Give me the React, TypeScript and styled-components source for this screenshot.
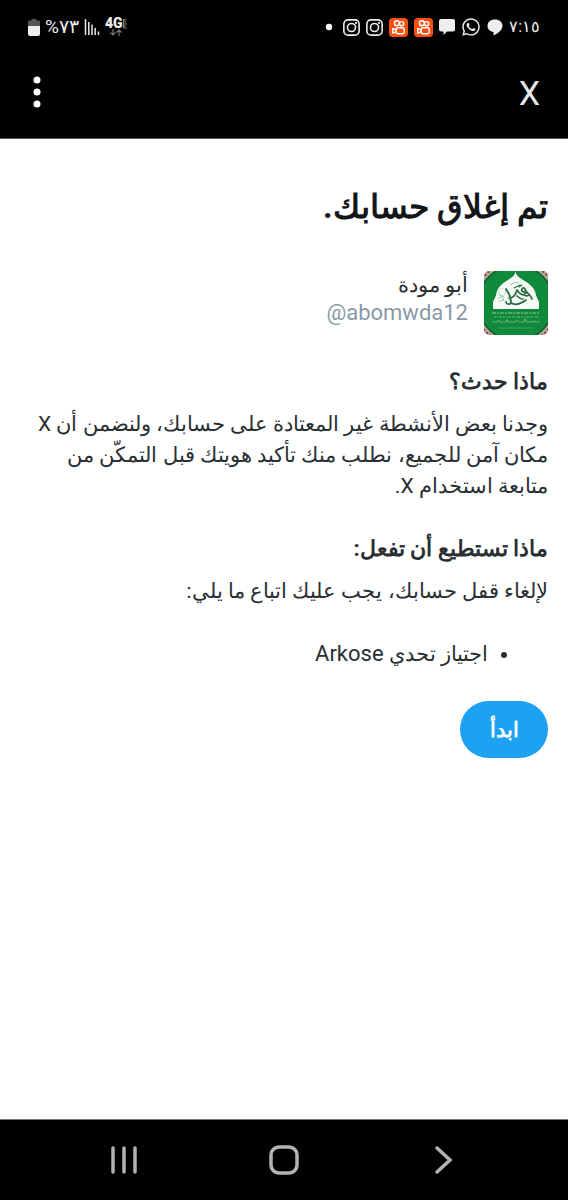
import React from "react";
import styled, { createGlobalStyle } from "styled-components";
import { FaWhatsapp } from "react-icons/fa";

const GlobalStyle = createGlobalStyle`
  *, *::before, *::after { box-sizing: border-box; }
  body {
    margin: 0;
    background: #fff;
    font-family: Roboto, "Liberation Sans", sans-serif;
    color: #292f33;
  }
`;

const Screen = styled.div`
  min-height: 100vh;
  display: flex;
  flex-direction: column;
`;

const StatusBar = styled.div`
  height: 54px;
  padding: 0 28px;
  background: #000;
  color: #eee;
  display: flex;
  align-items: center;
  justify-content: space-between;
`;

const StatusGroup = styled.div<{ $gap: number }>`
  display: flex;
  align-items: center;
  gap: ${(p) => p.$gap}px;
`;

const StatusText = styled.span<{ $size: number }>`
  font-size: ${(p) => p.$size}px;
  line-height: 20px;
`;

const Network = styled.span`
  display: flex;
  flex-direction: column;
  align-items: center;
`;

const NetworkType = styled.span`
  font-size: 14px;
  line-height: 11px;
  font-weight: 900;
`;

const AppBar = styled.header`
  height: 85px;
  padding: 0 28px 8px;
  background: #000;
  border-bottom: 1px solid #555;
  display: flex;
  align-items: center;
  justify-content: space-between;
`;

const BarTitle = styled.span`
  padding-top: 2px;
  font-size: 34px;
  line-height: 40px;
  color: #e6e6e6;
`;

const IconButton = styled.button`
  padding: 0;
  border: 0;
  background: none;
  display: flex;
`;

const Main = styled.main`
  flex: 1;
  padding: 44px 20px;
`;

const Title = styled.h1`
  margin: 0;
  font-size: 33px;
  line-height: 48px;
  font-weight: 700;
  color: #14171a;
`;

const Account = styled.div`
  margin-top: 40px;
  display: flex;
  gap: 16px;
`;

const AccountText = styled.div`
  display: flex;
  flex-direction: column;
  line-height: 28px;
`;

const Name = styled.span`
  font-size: 21px;
  font-weight: 500;
`;

const Handle = styled.span`
  font-size: 22px;
  color: #8899a6;
`;

const Section = styled.section`
  margin-top: 32px;
`;

const Heading = styled.h2`
  margin: 0 0 12px;
  font-size: 22px;
  line-height: 30px;
  font-weight: 700;
`;

const Paragraph = styled.p`
  margin: 0;
  font-size: 21px;
  line-height: 31px;
`;

const Latin = styled.span`
  font-size: 22px;
`;

const Steps = styled.ul`
  margin: 32px 0;
  padding: 0 60px 0 0;
  font-size: 21px;
  line-height: 30px;
`;

const StartButton = styled.button`
  height: 57px;
  min-width: 88px;
  padding: 0 28px;
  border: 0;
  border-radius: 29px;
  background: #1da1f2;
  color: #fff;
  font: inherit;
  font-size: 21px;
  font-weight: 700;
`;

const NavBar = styled.nav`
  height: 81px;
  padding: 0 44px;
  background: #000;
  border-top: 1px solid #777;
  display: flex;
  align-items: center;
  justify-content: space-around;
`;

const Instagram = () => (
  <svg width="17" height="17" viewBox="0 0 16 16" fill="none" stroke="#eee" strokeWidth="1.5">
    <rect x="0.8" y="0.8" width="14.4" height="14.4" rx="4" />
    <circle cx="8" cy="8" r="3.8" />
    <circle cx="12.3" cy="3.7" r="1" fill="#eee" stroke="none" />
  </svg>
);

const Kwai = () => (
  <svg width="19" height="19" viewBox="0 0 20 20" fill="none" stroke="#fff" strokeWidth="1.5">
    <rect width="20" height="20" rx="4" fill="#fb4f12" stroke="none" />
    <circle cx="8.300" cy="5.500" r="2.600" />
    <circle cx="13.300" cy="6" r="2.200" />
    <rect x="7.500" y="10.300" width="8.500" height="6.200" rx="1.800" />
    <path d="M7.500 12.500 4 11v5l3.500-1.500" strokeLinejoin="round" />
  </svg>
);

const Avatar = () => (
  <svg width="64" height="64" viewBox="0 0 64 64" role="img" aria-label="أبو مودة">
    <defs>
      <clipPath id="frame"><rect width="64" height="64" rx="5" /></clipPath>
    </defs>
    <g clipPath="url(#frame)">
      <rect width="64" height="64" fill="#b9a999" />
      <circle cx="32" cy="32" r="41.500" fill="none" stroke="#7b4c45" strokeWidth="2" strokeDasharray="2 2" />
      <circle cx="32" cy="32" r="38.500" fill="#0f5c2b" />
      <circle cx="32" cy="32" r="37" fill="#10893a" />
      <path d="M31.500 0C31 5 28 6 24 9C17 13 13 17 12 24C11 28 9 29 9 32V38H55V32C55 29 53 28 52 24C51 17 46 13 39 9C35 6 32 5 31.500 0Z" fill="#f6faf6" />
      <g fill="none" stroke="#2a6e42" strokeLinecap="round" strokeLinejoin="round">
        <path d="M45 24c-1-3-4-3-5 0 2 1 4 1 5 0M40 24c-3 0-5-2-7-5M42 20c-3 2-5 0-4-2 1-2 3-1 4 2M42 20c2 3 5 4 6 8M33 19c-1 4-3 8-8 8M33 25c2 2 4 3 6 3" strokeWidth="1.700" />
        <path d="M22 18c3 4 5 9 5 14 5 3 11 0 15-3M27 32c-2 2-5 1-5-1" strokeWidth="1.800" />
        <path d="M30 17l6-3M35 16l3-2" strokeWidth="1.100" />
      </g>
      <g fill="none" stroke="#9bc3a8" strokeWidth="1">
        <circle cx="18" cy="21" r="3.500" strokeDasharray="1 1" />
        <path d="M14 28q4-5 6 2M15 24l5 2M15 31l5-3M26 14q5-4 9-2" />
      </g>
      <g fill="none" stroke="#68b37e">
        <path d="M8 42h48" strokeDasharray="4 1 2 1" strokeWidth="1.500" />
        <path d="M10 46h44" strokeDasharray="2 1 1 1 3 1" strokeWidth="1.500" opacity=".7" />
        <path d="M8 51h5q2-3 3 0h6l1-2 2 2h6q2-3 4 0h5l1-3 2 3h5q2-2 3 0h5" strokeWidth="1.200" />
        <path d="M14 57h36" strokeDasharray="2 1 4 1" opacity=".7" />
      </g>
    </g>
  </svg>
);

export default function App() {
  return (
    <Screen dir="rtl" lang="ar">
      <GlobalStyle />
      <StatusBar>
        <StatusGroup $gap={6}>
          <StatusText $size={16}>٧:١٥</StatusText>
          <svg width="16" height="17" viewBox="0 0 16 17" fill="#eee">
            <path d="M8 .5C3.500.5.5 3.200.5 6.800c0 3.500 2.700 5.900 6 6.200V16.500C10 15 15.500 11.500 15.500 6.800 15.500 3.200 12.500.5 8 .5Z" />
          </svg>
          <FaWhatsapp size={20} />
          <svg width="16" height="16" viewBox="0 0 16 16" fill="#eee">
            <path d="M2 0h12a2 2 0 0 1 2 2v8.500a2 2 0 0 1-2 2H8L4.500 16v-3.500H2a2 2 0 0 1-2-2V2a2 2 0 0 1 2-2Z" />
          </svg>
          <Kwai />
          <Kwai />
          <Instagram />
          <Instagram />
          <svg width="16" height="8" viewBox="0 0 16 8"><circle cx="8" cy="4" r="3.200" fill="#fff" /></svg>
        </StatusGroup>
        <StatusGroup $gap={5}>
          <Network>
            <StatusGroup $gap={0} dir="ltr">
              <NetworkType>4G</NetworkType>
              <svg width="4" height="10" viewBox="0 0 4 10" fill="none" stroke="#999" strokeWidth="0.800">
                <path d="M0 1h4M0 3h3M0 5h4M0 7h3M0 9h4M.5 0v9" />
              </svg>
            </StatusGroup>
            <svg width="14" height="7" viewBox="0 0 14 7" fill="none" stroke="#777" strokeWidth="1.200">
              <path d="M4 0v6M1.500 3.500 4 6l2.500-2.500M10 7V1M7.500 3.500 10 1l2.500 2.500" />
            </svg>
          </Network>
          <svg width="16" height="16" viewBox="0 0 16 16" stroke="#ddd" strokeWidth="1.600">
            <path d="M1.500 0v16M4.800 3v13M8 5.500v10.500M11.200 9v7M14.500 12.500v3.500" />
          </svg>
          <StatusText $size={19}>٧٣%</StatusText>
          <svg width="12" height="17" viewBox="0 0 12 17">
            <path d="M3.500 0h5v1.500H11a1 1 0 0 1 1 1V8H0V2.500a1 1 0 0 1 1-1h2.500Z" fill="#555" />
            <path d="M0 7h12v8a2 2 0 0 1-2 2H2a2 2 0 0 1-2-2Z" fill="#eee" />
          </svg>
        </StatusGroup>
      </StatusBar>

      <AppBar>
        <BarTitle>X</BarTitle>
        <IconButton aria-label="المزيد">
          <svg width="18" height="32" viewBox="0 0 18 32" fill="#fff">
            <circle cx="9" cy="4" r="3.500" /><circle cx="9" cy="16" r="3.500" /><circle cx="9" cy="28" r="3.500" />
          </svg>
        </IconButton>
      </AppBar>

      <Main>
        <Title>تم إغلاق حسابك.</Title>
        <Account>
          <Avatar />
          <AccountText>
            <Name>أبو مودة</Name>
            <Handle dir="ltr">@abomwda12</Handle>
          </AccountText>
        </Account>
        <Section>
          <Heading>ماذا حدث؟</Heading>
          <Paragraph>
            وجدنا بعض الأنشطة غير المعتادة على حسابك، ولنضمن أن X مكان آمن للجميع، نطلب منك تأكيد هويتك قبل التمكّن من متابعة استخدام X.
          </Paragraph>
        </Section>
        <Section>
          <Heading>ماذا تستطيع أن تفعل:</Heading>
          <Paragraph>لإلغاء قفل حسابك، يجب عليك اتباع ما يلي:</Paragraph>
        </Section>
        <Steps>
          <li>اجتياز تحدي <Latin>Arkose</Latin></li>
        </Steps>
        <StartButton>ابدأ</StartButton>
      </Main>

      <NavBar>
        <IconButton aria-label="رجوع">
          <svg width="30" height="30" viewBox="0 0 30 30" fill="none" stroke="#b3b3b3" strokeWidth="3.500" strokeLinecap="round">
            <path d="M8 3 21 15 8 27" />
          </svg>
        </IconButton>
        <IconButton aria-label="الشاشة الرئيسية">
          <svg width="30" height="30" viewBox="0 0 30 30" fill="none" stroke="#b3b3b3" strokeWidth="3.500">
            <rect x="2" y="2" width="26" height="26" rx="8" />
          </svg>
        </IconButton>
        <IconButton aria-label="التطبيقات الأخيرة">
          <svg width="30" height="30" viewBox="0 0 30 30" stroke="#b3b3b3" strokeWidth="3.500" strokeLinecap="round">
            <path d="M4 3v24M15 3v24M26 3v24" />
          </svg>
        </IconButton>
      </NavBar>
    </Screen>
  );
}
